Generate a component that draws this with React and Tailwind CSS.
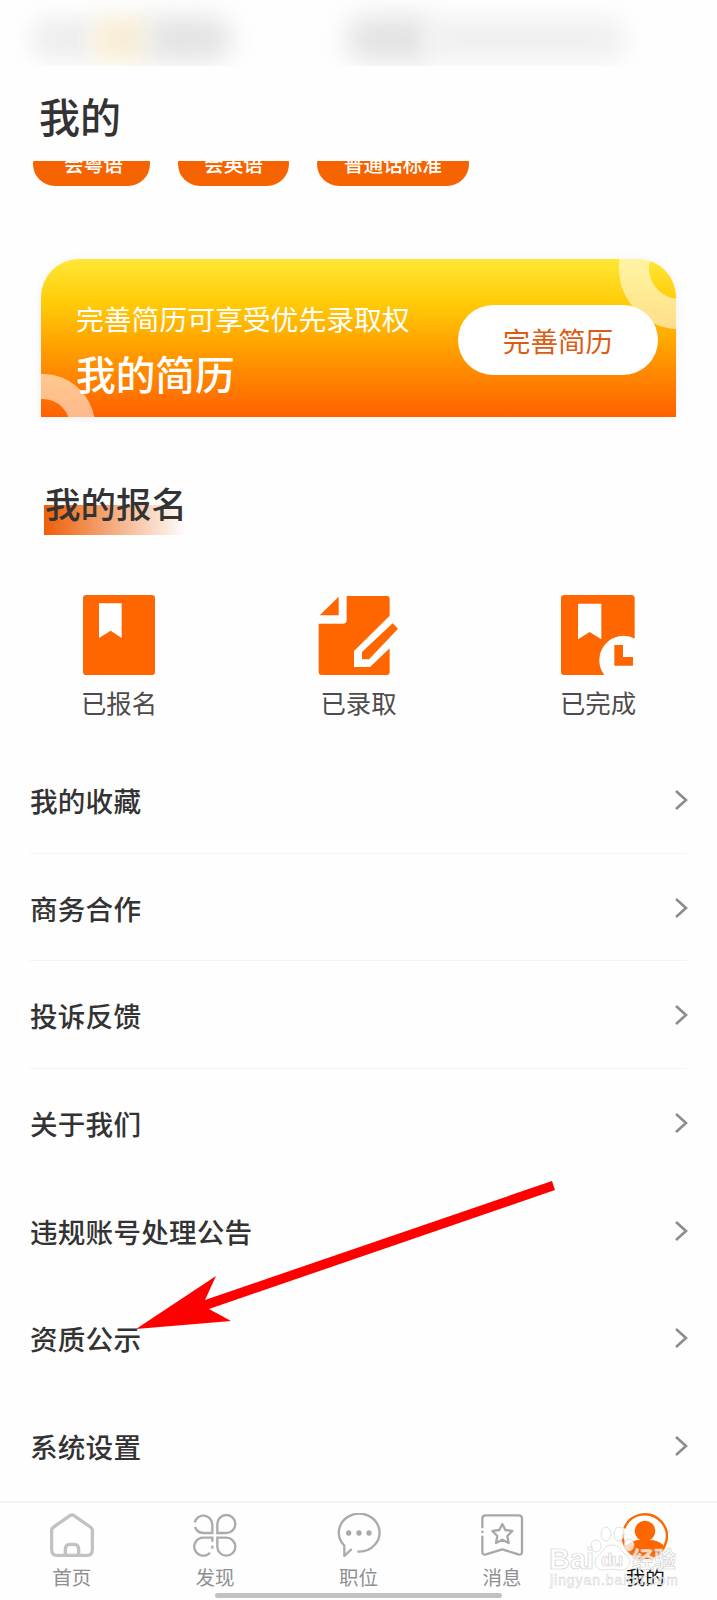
import React from 'react';

const tags = [
  { label: '会粤语', className: 'w-[117px] pl-[4px]' },
  { label: '会英语', className: 'ml-[28px] w-[111px]' },
  { label: '普通话标准', className: 'ml-[28px] w-[152px]' }
];

const menuItems = [
  { label: '我的收藏', divider: true },
  { label: '商务合作', divider: true },
  { label: '投诉反馈', divider: true },
  { label: '关于我们' },
  { label: '违规账号处理公告' },
  { label: '资质公示' },
  { label: '系统设置' }
];

const AppliedIcon = () => (
  <svg className="h-[80px] w-[72px]" viewBox="0 0 216 240" fill="#ff6600">
    <rect width="216" height="240" rx="10" />
    <path d="M48 25H116V129L83 107L48 129Z" fill="#fff" />
  </svg>
);

const AcceptedIcon = () => (
  <svg className="-ml-px h-[80px] w-[80px] shrink-0" viewBox="0 0 240 240" fill="#ff6600">
    <path d="M86 3H207Q215 3 215 12V62L108 168V216H156L215 160V231Q215 240 206 240H11Q2 240 2 231V86H74Q86 86 86 74Z" />
    <path d="M5 61L62 5V61Z" />
    <path d="M132 193V171L224 85L240 101L153 193Z" />
  </svg>
);

const FinishedIcon = () => (
  <svg className="h-[80px] w-[74px]" viewBox="0 0 222 240" fill="#ff6600">
    <rect width="221" height="240" rx="10" />
    <path d="M51 26H121V133L86 111L51 133Z" fill="#fff" />
    <path d="M222 131A73 73 0 0 0 130 240H222Z" fill="#fff" />
    <path d="M160 150H186V186H216V212H160Z" />
  </svg>
);

const HomeIcon = () => (
  <svg className="h-[44px] w-[44px]" viewBox="0 0 132 132" fill="none" stroke="#c2c2c2" strokeWidth="10" strokeLinejoin="round">
    <path d="M60 8Q66 4 72 8L121 42Q127 46 127 52V110Q127 127 111 127H21Q5 127 5 110V52Q5 46 11 42Z" />
    <path d="M46 126V110Q46 94 60 94H72Q86 94 86 110V126" />
  </svg>
);

const DiscoverIcon = () => (
  <svg className="h-[44px] w-[44px]" viewBox="0 0 132 132" fill="none" stroke="#ababab" strokeWidth="7">
    <path d="M5 28A27 27 0 0 1 58 33V60H31A27 27 0 0 1 6 42" />
    <path d="M73 60V33A27 27 0 1 1 100 60Z" />
    <path d="M73 74H100A27 27 0 1 1 73 101Z" />
    <path d="M58 86V74H31A27 27 0 1 0 51 119" />
    <path d="M58 98V107" />
  </svg>
);

const JobsIcon = () => (
  <svg className="h-[44px] w-[44px]" viewBox="0 0 132 132" fill="none" stroke="#ababab" strokeWidth="7" strokeLinejoin="round" strokeLinecap="round">
    <path d="M64 116A61 57 0 1 0 22 98V129L42 110" />
    <g fill="#a8a8a8" stroke="none">
      <circle cx="35" cy="60" r="8" />
      <circle cx="66" cy="60" r="8" />
      <circle cx="96" cy="60" r="8" />
    </g>
  </svg>
);

const MessageIcon = () => (
  <svg className="h-[44px] w-[44px]" viewBox="0 0 132 132" fill="none" stroke="#a8a8a8" strokeWidth="7" strokeLinejoin="round">
    <path d="M7 46V17Q7 7 17 7H116Q126 7 126 17V116Q126 127 115 124L67 109L18 124Q7 127 7 116V68" />
    <path d="M7 53V60" />
    <path d="M67 33L76 51L97 54L82 69L86 90L67 80L48 90L52 69L37 54L58 51Z" />
  </svg>
);

const MineIcon = () => (
  <svg className="h-[48px] w-[48px]" viewBox="0 0 144 144" fill="#ff6600">
    <path d="M10 52A66 66 0 1 1 6 68" fill="none" stroke="#ff6600" strokeWidth="7" />
    <circle cx="72" cy="60" r="31" />
    <path d="M14 106Q24 92 50 87H94Q120 92 130 106Q110 138 72 138Q34 138 14 106Z" />
  </svg>
);

const enrolments = [
  { label: '已报名', Icon: AppliedIcon },
  { label: '已录取', Icon: AcceptedIcon },
  { label: '已完成', Icon: FinishedIcon }
];

const tabs = [
  { label: '首页', Icon: HomeIcon },
  { label: '发现', Icon: DiscoverIcon },
  { label: '职位', Icon: JobsIcon },
  { label: '消息', Icon: MessageIcon },
  { label: '我的', Icon: MineIcon, active: true }
];

const StatusBar = () => (
  <div className="flex h-[66px] shrink-0 items-center overflow-hidden pt-[12px] pl-[30px]">
    <div className="h-[44px] w-[64px] rounded-l-full bg-[#efefef] blur-[10px]" />
    <div className="h-[46px] w-[54px] bg-[#f8eed6] blur-[11px]" />
    <div className="h-[46px] w-[84px] rounded-r-full bg-[#e4e4e4] blur-[12px]" />
    <div className="ml-[114px] h-[46px] w-[84px] rounded-l-full bg-[#e3e3e3] blur-[13px]" />
    <div className="h-[42px] w-[196px] rounded-r-full bg-[#f0f0f0] blur-[11px]" />
  </div>
);

const ResumeCard = () => (
  <div className="relative mx-[41px] mt-[73px] flex h-[158px] shrink-0 justify-between overflow-hidden rounded-t-[38px] bg-[linear-gradient(to_bottom,#ffe735,#ffcb08_28%,#ffa600_52%,#ff6000)] pr-[18px] pl-[35px] shadow-[0_1px_8px_rgba(0,0,0,0.07)]">
    {/* Corner rings */}
    <div className="absolute -top-[52px] -right-[65px] h-[122px] w-[122px] rounded-full border-[30px] border-white/55" />
    <div className="absolute -bottom-[62px] -left-[51px] h-[105px] w-[105px] rounded-full border-[25px] border-white/55" />
    <div className="relative pt-[45px] text-white">
      <p className="text-[27.8px] leading-[28px]">完善简历可享受优先录取权</p>
      <p className="mt-[21px] text-[39.7px] leading-[40px] font-medium">我的简历</p>
    </div>
    <button className="relative mt-[46px] h-[70px] w-[200px] rounded-full bg-white text-[27.6px] leading-[28px] text-[#dc5c14]">
      完善简历
    </button>
  </div>
);

const MenuRow = ({ label, divider }) => (
  <div className={`flex h-[107.6px] items-center justify-between border-b pt-[2px] ${divider ? 'border-[#f3f3f3]' : 'border-transparent'}`}>
    <span className="text-[27.6px] leading-[28px] font-medium tracking-[0.2px] text-[#333333]">{label}</span>
    <svg className="-mr-px h-[22px] w-[14px]" viewBox="0 0 14 22" fill="none" stroke="#8c8c8c" strokeWidth="2.6">
      <path d="M2 2L12 11L2 20" />
    </svg>
  </div>
);

const Watermark = () => (
  <svg className="absolute right-[32px] bottom-[10px] h-[72px] w-[140px]" viewBox="0 0 140 72" fill="#fff" fillOpacity="0.75" stroke="#d2d2d2" strokeWidth="0.7">
    <ellipse cx="51" cy="28" rx="5" ry="6" />
    <ellipse cx="61" cy="16" rx="5" ry="7" />
    <ellipse cx="74" cy="16" rx="5" ry="7" />
    <ellipse cx="84" cy="27" rx="5" ry="6" />
    <path d="M67 27C59 27 58 34 53 38C47 43 51 53 59 52C65 51 69 51 75 52C84 53 88 43 82 38C76 34 76 27 67 27Z" />
    <text x="4" y="51" fontFamily="Liberation Sans" fontWeight="bold" fontSize="29" textLength="45">Bai</text>
    <text x="56" y="48" fontFamily="Liberation Sans" fontWeight="bold" fontSize="19" textLength="22">du</text>
    <text x="87" y="49" fontFamily="Noto Sans CJK SC" fontWeight="bold" fontSize="22" textLength="44">经验</text>
    <text x="5" y="67" fontFamily="Liberation Sans" fontSize="14" strokeWidth="0.5" textLength="128">jingyan.baidu.com</text>
  </svg>
);

const TabBar = () => (
  <nav className="relative flex h-[99px] shrink-0 border-t-2 border-[#f3f3f3]">
    {tabs.map(({ label, Icon, active }) => (
      <div key={label} className="flex flex-1 flex-col items-center pt-[8px]">
        <div className="flex h-[48px] items-center">
          <Icon />
        </div>
        <span className={`mt-[8px] text-[19.5px] leading-[20px] ${active ? 'text-[#111111]' : 'text-[#8f8f8f]'}`}>{label}</span>
      </div>
    ))}
    <div className="absolute bottom-[2px] left-[215px] h-[5px] w-[287px] rounded-full bg-[#c2c2c2]" />
    <Watermark />
  </nav>
);

const App = () => {
  return (
    <div className="relative flex h-[1600px] w-[717px] flex-col overflow-hidden bg-[#fefefe] font-['Noto_Sans_CJK_SC',sans-serif]">
      <StatusBar />
      <h1 className="h-[95px] shrink-0 pt-[28px] pl-[39px] text-[41px] leading-[42px] font-medium text-[#333333]">我的</h1>

      {/* Tags scrolled partly under the title */}
      <div className="flex h-[25px] shrink-0 items-end overflow-hidden pl-[33px]">
        {tags.map((tag) => (
          <span
            key={tag.label}
            className={`flex h-[44px] shrink-0 items-center justify-center rounded-full bg-[#f56400] text-[19.6px] leading-[20px] font-medium text-white ${tag.className}`}
          >
            {tag.label}
          </span>
        ))}
      </div>

      <ResumeCard />

      <h2 className="mt-[68px] ml-[44px] h-[50px] w-[142px] shrink-0 bg-[linear-gradient(to_right,#ec5f08,#fefefe)] bg-[length:100%_30px] bg-bottom bg-no-repeat pl-px text-[35.5px] leading-[36px] font-medium whitespace-nowrap text-[#333333]">
        我的报名
      </h2>

      <div className="mt-[60px] flex h-[120px] shrink-0 justify-between px-[81px]">
        {enrolments.map(({ label, Icon }) => (
          <div key={label} className="flex w-[76px] flex-col items-center">
            <Icon />
            <span className="mt-[14px] text-[25.4px] leading-[26px] whitespace-nowrap text-[#4f4a4b]">{label}</span>
          </div>
        ))}
      </div>

      <div className="mt-[31px] flex-1 px-[30px]">
        {menuItems.map((item) => (
          <MenuRow key={item.label} {...item} />
        ))}
      </div>

      <TabBar />

      <svg className="absolute top-[1170px] left-[130px] h-[170px] w-[430px]" viewBox="130 1170 430 170" fill="#ff0000">
        <path d="M136 1329L216 1276L205 1300L552 1181L555 1190L209 1309L231 1321Z" />
      </svg>
    </div>
  );
};

export default App;
